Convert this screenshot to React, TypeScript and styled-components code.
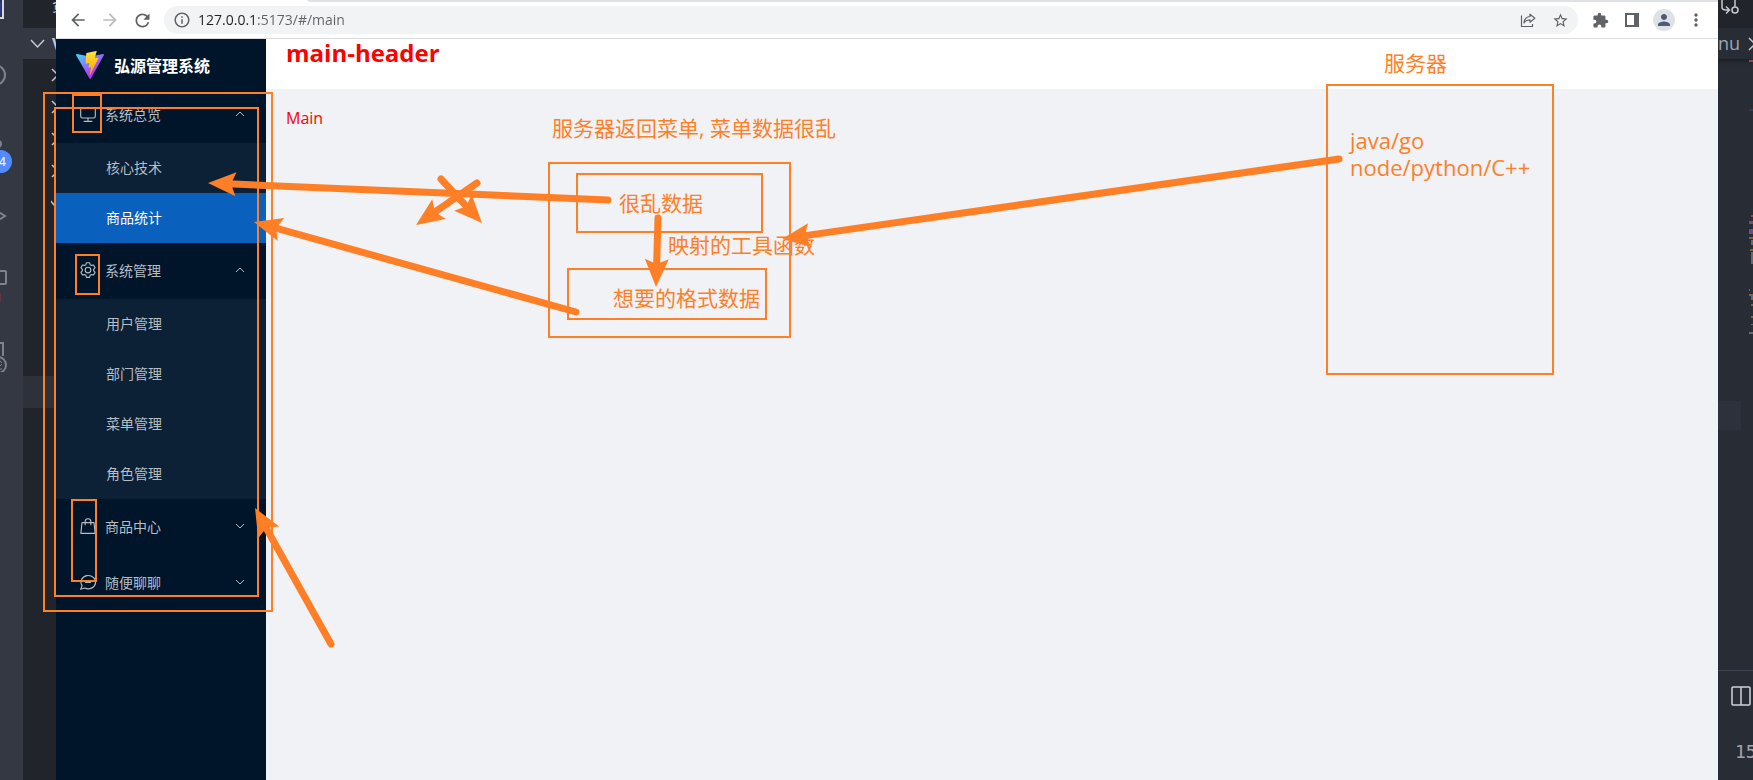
import React, { useState } from "react";
import styled, { createGlobalStyle } from "styled-components";
import {
  MdArrowBack,
  MdArrowForward,
  MdRefresh,
  MdInfoOutline,
  MdStarBorder,
  MdExtension,
  MdPerson,
  MdMoreVert,
} from "react-icons/md";

const ORANGE = "#ff7f27";

const GlobalStyle = createGlobalStyle`
  * { box-sizing: border-box; }
  body {
    margin: 0;
    background: #282c34;
    font-family: "Open Sans", "Noto Sans CJK SC", sans-serif;
  }
  button {
    border: 0;
    padding: 0;
    margin: 0;
    background: none;
    color: inherit;
    font: inherit;
  }
  svg { flex: none; }
`;

const Desktop = styled.div`
  position: relative;
  display: flex;
  height: 100vh;
  overflow: hidden;
`;

/* ---------- editor, left of the browser ---------- */

const ActivityBar = styled.nav`
  display: flex;
  flex: 0 0 23px;
  flex-direction: column;
  justify-content: flex-start;
  overflow: hidden;
  background: #333842;
  color: #7d828d;
`;

const ActivityButton = styled.button<{ $first?: boolean }>`
  position: relative;
  flex: none;
  width: 23px;
  height: ${(p) => (p.$first ? 42 : 66)}px;
  svg { display: block; }
`;

const Badge = styled.span`
  position: absolute;
  top: 42px;
  left: -11px;
  width: 23px;
  height: 23px;
  padding-left: 10px;
  border-radius: 50%;
  background: #528bff;
  color: #e6ecf8;
  font-size: 12px;
  font-weight: 600;
  line-height: 23px;
  text-align: left;
`;

const Explorer = styled.aside`
  display: flex;
  flex: 0 0 33px;
  flex-direction: column;
  overflow: hidden;
  background: #21252b;
  color: #c5c9d1;
`;

const ExplorerTop = styled.div`
  height: 28px;
  padding-left: 29px;
  font-size: 16px;
  line-height: 10px;
  overflow: hidden;
  white-space: nowrap;
`;

const ExplorerHeader = styled.button`
  display: flex;
  align-items: center;
  gap: 7px;
  height: 31px;
  padding-left: 7px;
  background: #333842;
  font-size: 16px;
  font-weight: 700;
`;

const Tree = styled.div`
  display: flex;
  flex-direction: column;
  align-items: flex-start;
  height: 317px;
  padding-left: 28px;
`;

const TreeToggle = styled.button`
  height: 32px;
  svg { display: block; }
`;

const TreeSelection = styled.div`
  height: 32px;
  background: #2c313a;
`;

/* ---------- editor, right of the browser ---------- */

const EditorRight = styled.aside`
  display: flex;
  flex: 0 0 35px;
  flex-direction: column;
  overflow: hidden;
  background: #282c34;
  color: #c5c9d1;
`;

const EditorActions = styled.div`
  height: 28px;
  background: #21252b;
`;

const EditorTab = styled.div`
  display: flex;
  align-items: center;
  gap: 8px;
  height: 31px;
  font-size: 18px;
  line-height: 31px;
  color: #9da5b4;
  box-shadow: 0 2px 4px #1b1e23;
`;

const CodeArea = styled.div`
  display: flex;
  flex-direction: column;
  height: 612px;
  border-bottom: 1px solid #3e444f;
`;

const Minimap = styled.svg`
  display: block;
  flex: 0 0 342px;
  align-self: flex-end;
`;

const CurrentLine = styled.div`
  width: 23px;
  height: 29px;
  background: #2c313c;
`;

const PanelBar = styled.div`
  display: flex;
  flex-direction: column;
  align-items: flex-start;
  gap: 34px;
  padding: 15px 0 0 13px;
  font-size: 18px;
  line-height: 24px;
  color: #a0a4ac;
`;

const PanelText = styled.span`
  padding-left: 4px;
  font-family: "DejaVu Sans Mono", monospace;
`;

/* ---------- browser ---------- */

const Browser = styled.section`
  display: flex;
  flex: 1 1 0;
  flex-direction: column;
  min-width: 0;
  background: #fff;
`;

const TabStrip = styled.div`
  flex: none;
  height: 2px;
  margin-left: 251px;
  border-bottom-left-radius: 6px 2px;
  background: #dee1e6;
`;

const Toolbar = styled.div`
  display: flex;
  flex: none;
  align-items: center;
  height: 37px;
  padding: 0 6px;
  border-bottom: 1px solid #dadce0;
  color: #5f6368;
`;

const ToolButton = styled.button<{ $muted?: boolean }>`
  display: flex;
  align-items: center;
  justify-content: center;
  flex: none;
  width: 32px;
  height: 28px;
  color: ${(p) => (p.$muted ? "#babcbe" : "#5f6368")};
`;

const AddressBar = styled.div`
  display: flex;
  flex: 1;
  align-items: center;
  height: 28px;
  margin: 0 6px;
  padding: 0 2px 0 9px;
  border-radius: 14px;
  background: #f1f3f4;
`;

const AddressInput = styled.input`
  flex: 1;
  min-width: 0;
  height: 26px;
  margin: 0 0 2px 7px;
  padding: 0;
  border: 0;
  outline: 0;
  background: linear-gradient(90deg, #202124 59px, #5f6368 59px);
  background-clip: text;
  -webkit-background-clip: text;
  color: transparent;
  font-family: "Open Sans", sans-serif;
  font-size: 14px;
`;

const Avatar = styled.span`
  display: flex;
  align-items: center;
  justify-content: center;
  width: 22px;
  height: 22px;
  border-radius: 50%;
  background: #dee1e6;
  color: #4f5b75;
`;

const Page = styled.div`
  display: flex;
  flex: 1;
  min-height: 0;
`;

const Sidebar = styled.nav`
  flex: 0 0 210px;
  background: #001529;
  font-size: 14px;
`;

const Brand = styled.div`
  display: flex;
  align-items: center;
  gap: 10px;
  height: 48px;
  padding: 4px 20px 0;
  color: #fff;
  font-size: 16px;
  font-weight: 700;
`;

const GroupTitle = styled.button`
  display: flex;
  align-items: center;
  width: 100%;
  height: 56px;
  padding: 0 20px 2px 23px;
  color: #b7bdc3;
  text-align: left;
`;

const GroupLabel = styled.span`
  flex: 1;
  padding-left: 8px;
`;

const SubMenu = styled.ul`
  margin: 0;
  padding: 0;
  list-style: none;
  background: #0c2135;
`;

const SubLink = styled.a<{ $active?: boolean }>`
  display: block;
  height: 50px;
  padding-left: 50px;
  background: ${(p) => (p.$active ? "#0a60bd" : "transparent")};
  color: ${(p) => (p.$active ? "#fff" : "#b7bdc3")};
  line-height: 50px;
  text-decoration: none;
`;

const Content = styled.div`
  display: flex;
  flex: 1;
  flex-direction: column;
  min-width: 0;
  color: #f00;
`;

const ContentHeader = styled.header`
  height: 50px;
  padding: 0 20px;
`;

const Title = styled.h1`
  margin: 0;
  font-size: 24px;
  line-height: 28px;
  font-weight: 700;
`;

const Main = styled.main`
  flex: 1;
  padding: 18px 20px;
  background: #f0f2f5;
  font-size: 16px;
  line-height: 22px;
`;

/* ---------- drawn notes over the desktop ---------- */

const Notes = styled.div`
  position: absolute;
  inset: 0;
  overflow: hidden;
  pointer-events: none;
  color: ${ORANGE};
`;

const Frame = styled.div<{ $x: number; $y: number; $w: number; $h: number }>`
  position: absolute;
  left: ${(p) => p.$x}px;
  top: ${(p) => p.$y}px;
  width: ${(p) => p.$w}px;
  height: ${(p) => p.$h}px;
  border: 2px solid ${ORANGE};
`;

const Note = styled.p<{ $x: number; $y: number; $large?: boolean }>`
  position: absolute;
  left: ${(p) => p.$x}px;
  top: ${(p) => p.$y}px;
  margin: 0;
  font-size: ${(p) => (p.$large ? 22 : 21)}px;
  line-height: 27px;
  white-space: pre;
`;

const ArrowLayer = styled.svg`
  position: absolute;
  top: 0;
  left: 0;
  width: 100%;
  height: 100%;
`;

type Point = [number, number];

function Arrow({ from, to }: { from: Point; to: Point }) {
  const length = Math.hypot(to[0] - from[0], to[1] - from[1]);
  const angle = (Math.atan2(to[1] - from[1], to[0] - from[0]) * 180) / Math.PI;
  return (
    <g transform={`translate(${to[0]} ${to[1]}) rotate(${angle})`} fill={ORANGE}>
      <line x1={-length} y1={0} x2={-20} y2={0} stroke={ORANGE} strokeWidth={7} strokeLinecap="round" />
      <path d="M0 0 L-28 -12 L-23 0 L-28 12 Z" />
    </g>
  );
}

const arrows: { from: Point; to: Point }[] = [
  { from: [608, 200], to: [208, 183] },
  { from: [576, 312], to: [254, 222] },
  { from: [658, 218], to: [656, 287] },
  { from: [1339, 159], to: [782, 239] },
  { from: [441, 179], to: [482, 223] },
  { from: [477, 183], to: [416, 225] },
  { from: [331, 644], to: [255, 508] },
];

const frames = [
  [43, 92, 230, 520],
  [54, 107, 205, 490],
  [72, 94, 30, 39],
  [75, 254, 25, 41],
  [71, 499, 26, 83],
  [548, 162, 243, 176],
  [576, 173, 187, 60],
  [567, 268, 200, 52],
  [1326, 84, 228, 291],
];

const notes = [
  { x: 552, y: 115, text: "服务器返回菜单, 菜单数据很乱" },
  { x: 619, y: 190, text: "很乱数据" },
  { x: 668, y: 232, text: "映射的工具函数" },
  { x: 613, y: 285, text: "想要的格式数据" },
  { x: 1384, y: 50, text: "服务器" },
  { x: 1350, y: 127, text: "java/go\nnode/python/C++", large: true },
];

/* ---------- icons ---------- */

function ViteLogo() {
  return (
    <svg width="28" height="28" viewBox="0 0 256 257" aria-hidden="true">
      <defs>
        <linearGradient id="shield" x1="-.828%" x2="57.636%" y1="7.652%" y2="78.411%">
          <stop offset="0%" stopColor="#41D1FF" />
          <stop offset="100%" stopColor="#BD34FE" />
        </linearGradient>
        <linearGradient id="bolt" x1="43.376%" x2="50.316%" y1="2.242%" y2="89.03%">
          <stop offset="0%" stopColor="#FFEA83" />
          <stop offset="8.333%" stopColor="#FFDD35" />
          <stop offset="100%" stopColor="#FFA800" />
        </linearGradient>
      </defs>
      <path fill="url(#shield)" d="M255.153 37.938L134.897 252.976c-2.483 4.44-8.862 4.466-11.382.048L.875 37.958c-2.746-4.814 1.371-10.646 6.827-9.67l120.385 21.517a6.537 6.537 0 0 0 2.322-.004l117.867-21.483c5.438-.991 9.574 4.796 6.877 9.62Z" />
      <path fill="url(#bolt)" d="M185.432.063L96.44 17.501a3.268 3.268 0 0 0-2.634 3.014l-5.474 92.456a3.268 3.268 0 0 0 3.997 3.378l24.777-5.718c2.318-.535 4.413 1.507 3.936 3.838l-7.361 36.047c-.495 2.426 1.782 4.5 4.151 3.78l15.304-4.649c2.372-.72 4.652 1.36 4.15 3.788l-11.698 56.621c-.732 3.542 3.979 5.473 5.943 2.437l1.313-2.028l72.516-144.72c1.215-2.423-.88-5.186-3.54-4.672l-25.505 4.922c-2.396.462-4.435-1.77-3.759-4.114l16.646-57.705c.677-2.35-1.37-4.583-3.769-4.113Z" />
    </svg>
  );
}

const menuIcons: Record<string, React.ReactNode> = {
  monitor: (
    <path fill="currentColor" d="M544 768v128h192a32 32 0 1 1 0 64H288a32 32 0 1 1 0-64h192V768H192A128 128 0 0 1 64 640V256a128 128 0 0 1 128-128h640a128 128 0 0 1 128 128v384a128 128 0 0 1-128 128H544zM192 192a64 64 0 0 0-64 64v384a64 64 0 0 0 64 64h640a64 64 0 0 0 64-64V256a64 64 0 0 0-64-64H192z" />
  ),
  setting: (
    <path fill="currentColor" d="M600.704 64a32 32 0 0 1 30.464 22.208l35.2 109.376c14.784 7.232 28.928 15.36 42.432 24.512l112.384-24.192a32 32 0 0 1 34.432 15.36L944.32 364.8a32 32 0 0 1-4.032 37.504l-77.12 85.12a357.12 357.12 0 0 1 0 49.024l77.12 85.248a32 32 0 0 1 4.032 37.504l-88.704 153.6a32 32 0 0 1-34.432 15.296L708.8 803.904c-13.44 9.088-27.648 17.28-42.368 24.512l-35.264 109.376A32 32 0 0 1 600.704 960H423.296a32 32 0 0 1-30.464-22.208L357.696 828.48a351.616 351.616 0 0 1-42.56-24.64l-112.32 24.256a32 32 0 0 1-34.432-15.36L79.68 659.2a32 32 0 0 1 4.032-37.504l77.12-85.248a357.12 357.12 0 0 1 0-48.896l-77.12-85.248A32 32 0 0 1 79.68 364.8l88.704-153.6a32 32 0 0 1 34.432-15.296l112.32 24.256c13.568-9.152 27.776-17.408 42.56-24.64l35.2-109.312A32 32 0 0 1 423.232 64H600.64zm-23.424 64H446.72l-36.352 113.088-24.512 11.968a294.113 294.113 0 0 0-34.816 20.096l-22.656 15.36-116.224-25.088-65.28 113.152 79.68 88.192-1.92 27.136a293.12 293.12 0 0 0 0 40.192l1.92 27.136-79.808 88.192 65.344 113.152 116.224-25.024 22.656 15.296a294.113 294.113 0 0 0 34.816 20.096l24.512 11.968L446.72 896h130.688l36.48-113.152 24.448-11.904a288.282 288.282 0 0 0 34.752-20.096l22.592-15.296 116.288 25.024 65.28-113.152-79.744-88.192 1.92-27.136a293.12 293.12 0 0 0 0-40.256l-1.92-27.136 79.808-88.128-65.344-113.152-116.288 24.96-22.592-15.232a287.616 287.616 0 0 0-34.752-20.096l-24.448-11.904L577.344 128zM512 320a192 192 0 1 1 0 384 192 192 0 0 1 0-384zm0 64a128 128 0 1 0 0 256 128 128 0 0 0 0-256z" />
  ),
  bag: (
    <g fill="none" stroke="currentColor" strokeWidth="64" strokeLinecap="round" strokeLinejoin="round">
      <path d="M170 320h684l64 608H106z" />
      <path d="M352 440V256a160 160 0 0 1 320 0v184" />
    </g>
  ),
  chat: (
    <g fill="none" stroke="currentColor" strokeWidth="64" strokeLinecap="round" strokeLinejoin="round">
      <path d="M174 720A416 380 0 1 1 330 855L96 928z" />
      <path d="M370 540h284" />
    </g>
  ),
};

function MenuIcon({ name }: { name: string }) {
  return (
    <svg width="18" height="18" viewBox="0 0 1024 1024" aria-hidden="true">
      {menuIcons[name]}
    </svg>
  );
}

function Chevron({ open }: { open: boolean }) {
  return (
    <svg width="12" height="12" viewBox="0 0 12 12" aria-hidden="true">
      <path d={open ? "M2 8l4-4 4 4" : "M2 4l4 4 4-4"} fill="none" stroke="currentColor" strokeWidth="1" />
    </svg>
  );
}

function ShareIcon() {
  return (
    <svg width="16" height="16" viewBox="0 0 16 16" fill="none" stroke="currentColor" strokeWidth="1.2" aria-hidden="true">
      <path d="M1.5 3.500V14.500H12.500V12" />
      <path d="M10 2.200 14.800 6.300 10 10.200V7.900C7 7.900 5.200 8.800 4 11 4.300 7.300 6.600 4.900 10 4.500Z" strokeLinejoin="round" />
    </svg>
  );
}

function SidePanelIcon() {
  return (
    <svg width="14" height="14" viewBox="0 0 14 14" aria-hidden="true">
      <path fill="currentColor" fillRule="evenodd" d="M0 0H14V14H0ZM2 2V12H9V2Z" />
    </svg>
  );
}

const activityDrawings = [
  { label: "Explorer", art: <g><path d="M-8 -4H3V18H-8" fill="none" stroke="#d7dae0" strokeWidth="2" /><path d="M-4 2H1V15H-4Z" fill="#2d3f83" /></g> },
  { label: "Search", art: <circle cx="-5" cy="33" r="10" fill="none" stroke="currentColor" strokeWidth="2" /> },
  { label: "Source control", badge: "4", art: <circle cx="-2" cy="36" r="3" fill="none" stroke="currentColor" strokeWidth="2" /> },
  { label: "Run", art: <path d="M-8 34 L5 42 L-8 50" fill="none" stroke="currentColor" strokeWidth="2" /> },
  { label: "Extensions", art: <g><rect x="-8" y="31" width="14" height="13" rx="1" fill="none" stroke="currentColor" strokeWidth="2" /><path d="M-1 53h2v9h-2z" fill="#67333f" /></g> },
  { label: "Remote", art: <g fill="none" stroke="currentColor" strokeWidth="2"><path d="M-8 37H3V50" /><circle cx="-2" cy="59" r="8" /><path d="M0 55l2 2M0 60l2-2M-1 63h3" strokeWidth="1" /></g> },
];

/* ---------- menu data ---------- */

const menu = [
  { title: "系统总览", icon: "monitor", items: ["核心技术", "商品统计"] },
  { title: "系统管理", icon: "setting", items: ["用户管理", "部门管理", "菜单管理", "角色管理"] },
  { title: "商品中心", icon: "bag", items: [] },
  { title: "随便聊聊", icon: "chat", items: [] },
];

function SideMenu() {
  const [open, setOpen] = useState<string[]>(["系统总览", "系统管理"]);
  const [active, setActive] = useState("商品统计");
  const toggle = (title: string) =>
    setOpen((now) => (now.includes(title) ? now.filter((t) => t !== title) : [...now, title]));

  return (
    <Sidebar>
      <Brand>
        <ViteLogo />
        <span>弘源管理系统</span>
      </Brand>
      {menu.map((group) => {
        const isOpen = open.includes(group.title);
        return (
          <div key={group.title}>
            <GroupTitle type="button" aria-expanded={isOpen} onClick={() => toggle(group.title)}>
              <MenuIcon name={group.icon} />
              <GroupLabel>{group.title}</GroupLabel>
              <Chevron open={isOpen} />
            </GroupTitle>
            {isOpen && (
              <SubMenu>
                {group.items.map((item) => (
                  <li key={item}>
                    <SubLink href="#/main" $active={item === active} onClick={() => setActive(item)}>
                      {item}
                    </SubLink>
                  </li>
                ))}
              </SubMenu>
            )}
          </div>
        );
      })}
    </Sidebar>
  );
}

export default function App() {
  return (
    <>
      <GlobalStyle />
      <Desktop>
        <ActivityBar aria-label="Activity bar">
          {activityDrawings.map((entry, i) => (
            <ActivityButton key={entry.label} type="button" aria-label={entry.label} $first={i === 0}>
              <svg width="23" height={i === 0 ? 42 : 66} aria-hidden="true">{entry.art}</svg>
              {entry.badge && <Badge>{entry.badge}</Badge>}
            </ActivityButton>
          ))}
        </ActivityBar>

        <Explorer aria-label="Explorer">
          <ExplorerTop>资</ExplorerTop>
          <ExplorerHeader type="button">
            <svg width="15" height="10" viewBox="0 0 15 10" aria-hidden="true">
              <path d="M1 1l6.500 7L14 1" fill="none" stroke="currentColor" strokeWidth="1.500" />
            </svg>
            <span>V</span>
          </ExplorerHeader>
          <Tree>
            {["a", "b", "c", "d"].map((key) => (
              <TreeToggle key={key} type="button" aria-label="Expand folder">
                <svg width="8" height="14" viewBox="0 0 8 14" aria-hidden="true">
                  <path d="M1 1l6 6-6 6" fill="none" stroke="currentColor" strokeWidth="1.500" />
                </svg>
              </TreeToggle>
            ))}
            <TreeToggle type="button" aria-label="Collapse folder">
              <svg width="14" height="10" viewBox="0 0 14 10" aria-hidden="true">
                <path d="M-2 1l6 7 6-7" fill="none" stroke="currentColor" strokeWidth="1.500" />
              </svg>
            </TreeToggle>
          </Tree>
          <TreeSelection />
        </Explorer>

        <Browser>
          <TabStrip />
          <Toolbar>
            <ToolButton type="button" aria-label="Back"><MdArrowBack size={20} /></ToolButton>
            <ToolButton type="button" aria-label="Forward" $muted><MdArrowForward size={20} /></ToolButton>
            <ToolButton type="button" aria-label="Reload"><MdRefresh size={21} /></ToolButton>
            <AddressBar>
              <MdInfoOutline size={18} />
              <AddressInput aria-label="Address" defaultValue="127.0.0.1:5173/#/main" />
              <ToolButton type="button" aria-label="Share"><ShareIcon /></ToolButton>
              <ToolButton type="button" aria-label="Bookmark"><MdStarBorder size={17} /></ToolButton>
            </AddressBar>
            <ToolButton type="button" aria-label="Extensions"><MdExtension size={17} /></ToolButton>
            <ToolButton type="button" aria-label="Side panel"><SidePanelIcon /></ToolButton>
            <ToolButton type="button" aria-label="Profile">
              <Avatar><MdPerson size={18} /></Avatar>
            </ToolButton>
            <ToolButton type="button" aria-label="More"><MdMoreVert size={20} /></ToolButton>
          </Toolbar>
          <Page>
            <SideMenu />
            <Content>
              <ContentHeader>
                <Title>main-header</Title>
              </ContentHeader>
              <Main>Main</Main>
            </Content>
          </Page>
        </Browser>

        <EditorRight aria-label="Editor">
          <EditorActions>
            <svg width="35" height="28" viewBox="0 0 35 28" fill="none" stroke="currentColor" strokeWidth="1.500" aria-hidden="true">
              <path d="M4 0V7Q4 10 8 10H11M8 6.500L11.500 10 8 13.500M17 0V6.500" />
              <circle cx="17" cy="10" r="3" />
            </svg>
          </EditorActions>
          <EditorTab>
            <span>nu</span>
            <svg width="14" height="14" viewBox="0 0 14 14" aria-hidden="true">
              <path d="M1 1l12 12M13 1L1 13" fill="none" stroke="#c5c9d1" strokeWidth="1.500" />
            </svg>
          </EditorTab>
          <CodeArea>
            <Minimap width="4" height="342" viewBox="0 0 4 342" aria-hidden="true">
              <path d="M0 1h4v2H0zM2 156h2v2H2z" fill="#8a4a55" />
              <path d="M0 50h4v2H0z" fill="#24425f" />
              <path d="M0 162h4v3H0zM0 170h4v5H0z" fill="#734a7d" />
              <path d="M0 178h4v2H0zM1 190h3v2H1zM0 235h4v2H0zM2 245h2v2H2zM2 257h2v2H2z" fill="#7d6247" />
              <path d="M2 181h2v5H2zM2 193h2v12H2zM0 230h1v2H0zM2 237h2v4H2zM2 265h2v1H2zM0 273h4v2H0z" fill="#626a76" />
            </Minimap>
            <CurrentLine />
          </CodeArea>
          <PanelBar>
            <svg width="20" height="20" viewBox="0 0 20 20" aria-hidden="true">
              <path d="M1 2Q1 1 2 1H18Q19 1 19 2V18Q19 19 18 19H2Q1 19 1 18ZM10 1V19" fill="none" stroke="#d0d3d9" strokeWidth="1.500" />
            </svg>
            <PanelText>15</PanelText>
          </PanelBar>
        </EditorRight>

        <Notes>
          {frames.map(([x, y, w, h]) => (
            <Frame key={`${x}-${y}`} $x={x} $y={y} $w={w} $h={h} />
          ))}
          <ArrowLayer aria-hidden="true">
            {arrows.map((a) => (
              <Arrow key={a.to.join()} from={a.from} to={a.to} />
            ))}
          </ArrowLayer>
          {notes.map((n) => (
            <Note key={n.text} $x={n.x} $y={n.y} $large={n.large}>{n.text}</Note>
          ))}
        </Notes>
      </Desktop>
    </>
  );
}
